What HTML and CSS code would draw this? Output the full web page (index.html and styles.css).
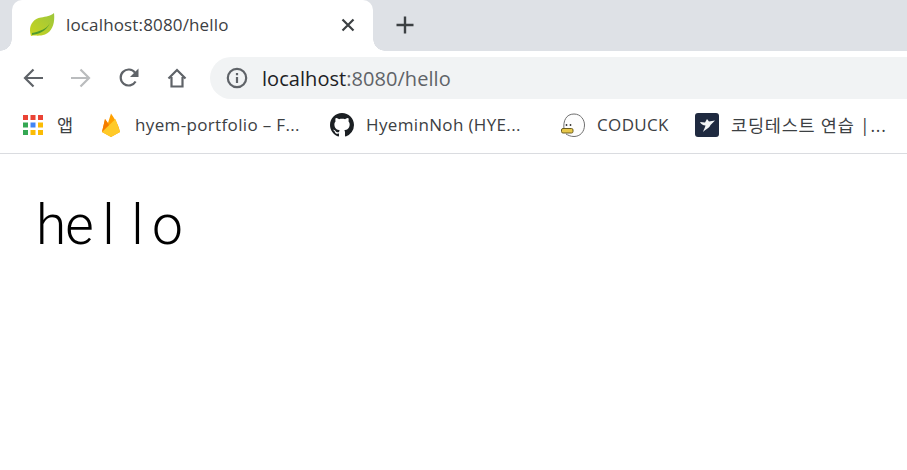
FILE: index.html
```html
<!DOCTYPE html>
<html lang="ko">
<head>
  <meta charset="UTF-8" />
  <title>localhost:8080/hello</title>
  <link rel="stylesheet" href="styles.css">
</head>
<body>
  <div class="tabstrip">
    <div class="tab">
      <svg class="tab-icon" viewBox="0 0 26 24" width="26" height="24">
        <defs>
          <linearGradient id="leaf" x1="0" y1="1" x2="1" y2="0">
            <stop offset="0" stop-color="#c8d41f"/>
            <stop offset="1" stop-color="#9cc63c"/>
          </linearGradient>
        </defs>
        <path d="M2 23 C-1 14 3 6 12 4.500 C17 3.500 22 3 25 0 C26 9 24 18 16 21.500 C11 23.500 6 22 2 23 Z" fill="url(#leaf)"/>
        <path d="M3 22 C9 21 17 19 21 10 C18 16 10 18.500 3 20 Z" fill="#4f9a2e"/>
      </svg>
      <span class="tab-title">localhost:8080/hello</span>
      <svg class="tab-close" viewBox="0 0 14 14" width="14" height="14">
        <path d="M1.5 1.5 L12.5 12.5 M12.5 1.5 L1.5 12.5" stroke="#3c4043" stroke-width="2.2" fill="none"/>
      </svg>
    </div>
    <svg class="new-tab" viewBox="0 0 18 18" width="18" height="18">
      <path d="M9 0.5 V17.5 M0.5 9 H17.5" stroke="#3c4043" stroke-width="2.4" fill="none"/>
    </svg>
  </div>

  <div class="toolbar">
    <div class="nav">
      <svg viewBox="0 0 20 20" width="20" height="20">
        <path d="M20 10 H2 M10.5 1.5 L2 10 L10.5 18.5" stroke="#5f6368" stroke-width="2.2" fill="none"/>
      </svg>
      <svg viewBox="0 0 20 20" width="20" height="20">
        <path d="M0 10 H18 M9.5 1.5 L18 10 L9.5 18.5" stroke="#babcbe" stroke-width="2.2" fill="none"/>
      </svg>
      <svg viewBox="0 0 20 20" width="20" height="20">
        <path d="M16.6 13.5 A8 8 0 1 1 16 4.6" stroke="#5f6368" stroke-width="2.2" fill="none"/>
        <path d="M19.5 0.5 V9 H11 Z" fill="#5f6368"/>
      </svg>
      <svg viewBox="0 0 20 20" width="20" height="20">
        <path d="M1.5 10.5 L10 2 L18.500 10.500 M4.500 9 V18.500 H15.500 V9" stroke="#5f6368" stroke-width="2.200" fill="none"/>
      </svg>
    </div>
    <div class="omnibox">
      <svg viewBox="0 0 22 22" width="22" height="22">
        <circle cx="11" cy="11" r="9.200" stroke="#5f6368" stroke-width="2.200" fill="none"/>
        <path d="M11 10 V16 M11 6 V8.200" stroke="#5f6368" stroke-width="2.200" fill="none"/>
      </svg>
      <span class="url"><span class="host">localhost</span>:8080/hello</span>
    </div>
  </div>

  <div class="bookmarks">
    <div class="mark">
      <svg viewBox="0 0 24 24" width="24" height="24">
        <rect x="2" y="2" width="5" height="5" fill="#ea4335"/>
        <rect x="9.500" y="2" width="5" height="5" fill="#ea4335"/>
        <rect x="17" y="2" width="5" height="5" fill="#ea4335"/>
        <rect x="2" y="9.500" width="5" height="5" fill="#34a853"/>
        <rect x="9.500" y="9.500" width="5" height="5" fill="#4285f4"/>
        <rect x="17" y="9.500" width="5" height="5" fill="#fbbc05"/>
        <rect x="2" y="17" width="5" height="5" fill="#34a853"/>
        <rect x="9.500" y="17" width="5" height="5" fill="#fbbc05"/>
        <rect x="17" y="17" width="5" height="5" fill="#fbbc05"/>
      </svg>
      <span class="ko">앱</span>
    </div>
    <div class="mark">
      <svg viewBox="0 0 24 24" width="24" height="24">
        <path d="M3 19 L6 6 L9 10 L12 0.500 C15 5 20 12 21 19 L12 24 Z" fill="#ffa000"/>
        <path d="M3 19 L6 6 L12 15 Z" fill="#f57c00"/>
        <path d="M3 19 L16.500 6 L21 19 L12 24 Z" fill="#ffca28"/>
      </svg>
      <span>hyem-portfolio – F...</span>
    </div>
    <div class="mark">
      <svg viewBox="0 0 16 16" width="24" height="24">
        <path fill="#1b1f23" d="M8 0C3.580 0 0 3.580 0 8c0 3.540 2.290 6.530 5.470 7.590.4.070.55-.17.55-.38 0-.19-.01-.82-.01-1.490-2.010.37-2.530-.49-2.690-.94-.09-.23-.48-.94-.82-1.130-.28-.15-.68-.52-.01-.53.630-.01 1.080.58 1.230.82.720 1.210 1.870.87 2.330.66.070-.52.280-.87.510-1.070-1.780-.2-3.640-.89-3.640-3.950 0-.87.310-1.590.820-2.150-.08-.2-.36-1.020.08-2.120 0 0 .67-.21 2.200.82.640-.18 1.320-.27 2-.27s1.360.09 2 .27c1.530-1.040 2.200-.82 2.200-.82.440 1.100.16 1.920.08 2.120.510.560.820 1.270.820 2.150 0 3.070-1.870 3.750-3.650 3.950.290.250.540.730.540 1.480 0 1.070-.01 1.930-.01 2.200 0 .21.150.46.550.38A8.010 8.010 0 0 0 16 8c0-4.420-3.580-8-8-8z"/>
      </svg>
      <span>HyeminNoh (HYE...</span>
    </div>
    <div class="mark">
      <svg viewBox="0 0 24 24" width="24" height="24">
        <path d="M3 16 C2 8 5 1 13 1 C20 1 23.500 7 23.500 12 C23.500 19 19 23.500 13 23.500 C9 23.500 7 22 5 21" stroke="#6f6f6f" stroke-width="1" fill="#fdfdfd"/>
        <circle cx="5.500" cy="12" r="0.900" fill="#333"/>
        <circle cx="9.500" cy="12" r="0.900" fill="#333"/>
        <rect x="0.500" y="15.500" width="11.500" height="4.500" rx="1.500" fill="#e8c84a" stroke="#6b5c1e"/>
      </svg>
      <span>CODUCK</span>
    </div>
    <div class="mark">
      <svg viewBox="0 0 24 24" width="24" height="24">
        <rect width="24" height="24" rx="3" fill="#1f2a40"/>
        <path d="M5 9 L10 9.500 L12 6 L14 8.500 L20 7.500 L15.500 12 C14.500 15 11 16 8 19 C9 16 10 14.500 10.500 12.500 C8 12.500 6 11 5 9 Z" fill="#f4f6f8"/>
      </svg>
      <span class="ko">코딩테스트 연습 |...</span>
    </div>
  </div>

  <div class="content">
    <p class="hello"><span>h</span><span>e</span><span>l</span><span>l</span><span>o</span></p>
  </div>
</body>
</html>
```
FILE: styles.css
```css
/* Browser frame */
body {
  margin: 0;
  font-family: "Open Sans", "Noto Sans CJK KR", sans-serif;
  background-color: white;
  color: #3c4043;
  overflow: hidden;
}
svg {
  display: block;
  flex: none;
}

/* Tab strip */
.tabstrip {
  display: flex;
  align-items: stretch;
  height: 51px;
  padding-left: 12px;
  background-color: #dee1e6;
}
.tab {
  position: relative;
  display: flex;
  align-items: center;
  width: 361px;
  box-sizing: border-box;
  padding: 0 18px 2px 17px;
  background-color: white;
  border-radius: 10px 10px 0 0;
}
.tab::before,
.tab::after {
  content: "";
  position: absolute;
  bottom: 0;
  width: 12px;
  height: 12px;
}
.tab::before {
  left: -12px;
  background: radial-gradient(circle at 0 0, #dee1e6 11.500px, white 12px);
}
.tab::after {
  right: -12px;
  background: radial-gradient(circle at 100% 0, #dee1e6 11.500px, white 12px);
}
.tab-title {
  flex: 1;
  margin-left: 11px;
  font-size: 17px;
  letter-spacing: 0.15px;
}
.new-tab {
  align-self: center;
  margin: 0 0 2px 23px;
}

/* Toolbar */
.toolbar {
  display: flex;
  align-items: center;
  height: 54px;
  padding-left: 23px;
}
.nav {
  display: flex;
  gap: 28px;
}
.omnibox {
  display: flex;
  align-items: center;
  flex: 1;
  height: 42px;
  margin-left: 23px;
  padding-left: 16px;
  gap: 14px;
  background-color: #f1f3f4;
  border-radius: 21px 0 0 21px;
}
.url {
  font-size: 20px;
  letter-spacing: 0.05px;
  color: #5f6368;
}
.host {
  color: #202124;
}

/* Bookmarks bar */
.bookmarks {
  display: grid;
  grid-template-columns: 78px 231px 231px 134px 1fr;
  align-items: center;
  height: 49px;
  box-sizing: border-box;
  padding: 0 0 9px 21px;
  border-bottom: 1px solid #dadce0;
}
.mark {
  display: flex;
  align-items: center;
  gap: 12px;
  font-size: 17px;
  letter-spacing: 0.35px;
  white-space: nowrap;
}
.mark .ko {
  font-size: 17.500px;
  letter-spacing: 0.800px;
}

/* Page */
.content {
  padding: 33px 36px;
}
.hello {
  display: flex;
  margin: 0;
  font-family: Roboto, sans-serif;
  font-size: 55px;
  font-weight: 300;
  line-height: 76px;
  color: black;
}
.hello span {
  width: 29px;
  text-align: center;
}
```
